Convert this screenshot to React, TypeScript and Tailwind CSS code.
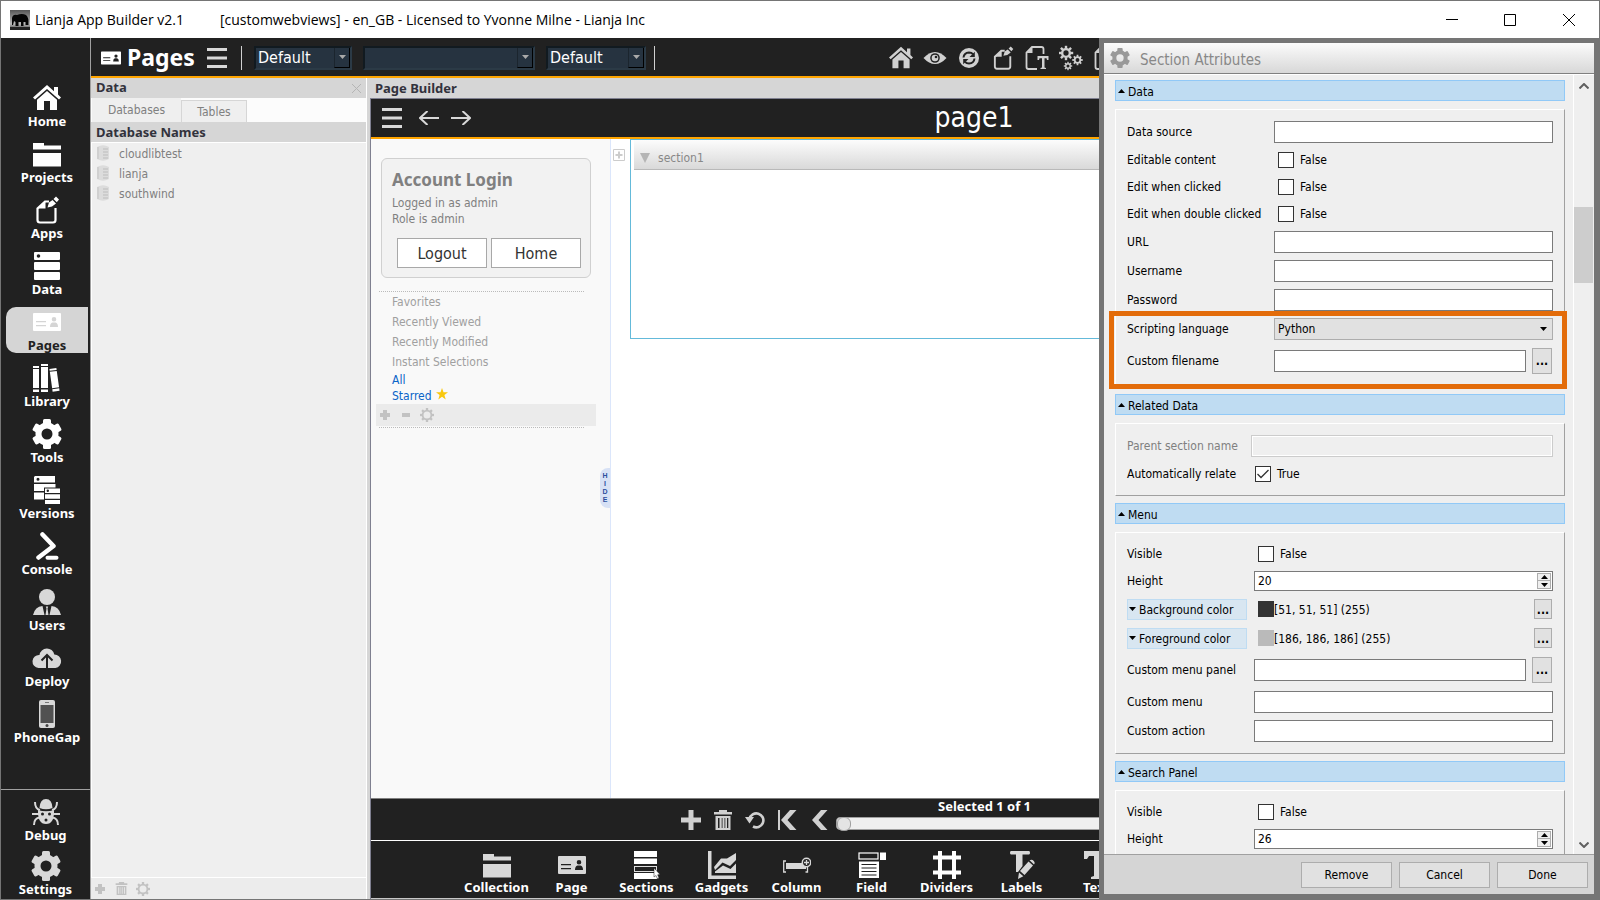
import { useState, type ReactNode } from 'react'

type IconProps = { className?: string }

/* ---------- icons ---------- */

function Gear({ className = '', teeth = 6, toothWidth = 8, hole = 6 }: IconProps & { teeth?: number; toothWidth?: number; hole?: number }) {
  const ring = 11 - hole
  return (
    <svg viewBox="-15 -15 30 30" className={className} aria-hidden="true">
      <circle r={hole + ring / 2} fill="none" stroke="currentColor" strokeWidth={ring + 1} />
      {Array.from({ length: teeth }, (_, i) => (
        <rect key={i} x={-toothWidth / 2} y={-15} width={toothWidth} height={6} rx={1.5} fill="currentColor" transform={`rotate(${(360 / teeth) * i})`} />
      ))}
    </svg>
  )
}

function ThinGear({ className = '' }: IconProps) {
  return (
    <svg viewBox="-15 -15 30 30" className={className} aria-hidden="true">
      <circle r="9.5" fill="none" stroke="currentColor" strokeWidth="4" />
      {Array.from({ length: 8 }, (_, i) => (
        <rect key={i} x="-2.5" y="-15" width="5" height="5" fill="currentColor" transform={`rotate(${45 * i})`} />
      ))}
    </svg>
  )
}

function HouseIcon({ className = '' }: IconProps) {
  return (
    <svg viewBox="0 0 28 28" className={className} fill="currentColor" aria-hidden="true">
      <path d="M14 1 L0 13.5 L2 15.6 L14 5 L26 15.6 L28 13.5 L25 10.6 V3 H21 V7.2 Z" />
      <path d="M14 7 L4 15.8 V26 H11 V17 H17 V26 H24 V15.8 Z" />
    </svg>
  )
}

function FolderIcon({ className = '' }: IconProps) {
  return (
    <svg viewBox="0 0 28 28" className={className} fill="currentColor" aria-hidden="true">
      <path d="M0 3 H11 V5.5 H28 V9.5 H0 Z" />
      <path d="M0 13 H28 V26.5 H0 Z" />
    </svg>
  )
}

function DocEditIcon({ className = '' }: IconProps) {
  return (
    <svg viewBox="0 0 28 28" className={className} aria-hidden="true">
      <path d="M16 5.5 H12 L4.5 12.5 V24 Q4.5 26.5 7 26.5 H20 Q22.5 26.5 22.5 24 V12" fill="none" stroke="currentColor" strokeWidth="2.2" />
      <path d="M12.5 5 V12.5 H4.5 Z" fill="currentColor" />
      <path d="M14.5 11.5 L16 6.5 L19.5 4 L23 7.5 L19 10.5 Z M20.5 3 L23 0.5 L26 3.5 L23.8 6.2 Z" fill="currentColor" />
    </svg>
  )
}

function DocTextIcon({ className = '' }: IconProps) {
  return (
    <svg viewBox="0 0 24 26" className={className} aria-hidden="true">
      <path d="M18.5 9 V4 Q18.5 2 16.5 2 H7 L1.5 7.5 V22 Q1.5 24 3.5 24 H12" fill="none" stroke="currentColor" strokeWidth="1.8" />
      <path d="M7.5 2 V8 H1.5 Z" fill="currentColor" />
      <path d="M12.5 11 H23.5 V15 H22 L21.5 13.2 H19.5 V22.5 L21 23 V24 H15.5 V23 L17 22.5 V13.2 H14.5 L14 15 H12.5 Z" fill="currentColor" />
    </svg>
  )
}

function ServerIcon({ className = '' }: IconProps) {
  return (
    <svg viewBox="0 0 28 28" className={className} aria-hidden="true">
      <path d="M2 0 H26 Q27 0 27 1 V7 Q27 8 26 8 H2 Q1 8 1 7 V1 Q1 0 2 0 Z M5.5 2.2 A1.8 1.8 0 1 0 5.5 5.8 A1.8 1.8 0 1 0 5.5 2.2 Z" fill="currentColor" fillRule="evenodd" />
      <rect x="1" y="10" width="26" height="8" rx="1" fill="currentColor" />
      <rect x="1" y="20" width="26" height="8" rx="1" fill="currentColor" />
    </svg>
  )
}

function CardIcon({ className = '' }: IconProps) {
  return (
    <svg viewBox="0 0 28 28" className={className} fill="currentColor" fillRule="evenodd" aria-hidden="true">
      <path d="M1 5 H27 Q28 5 28 6 V22 Q28 23 27 23 H1 Q0 23 0 22 V6 Q0 5 1 5 Z M3 13 V14.2 H13 V13 Z M3 17 V18.2 H13 V17 Z M21 9 A2.3 2.3 0 1 0 21 13.6 A2.3 2.3 0 1 0 21 9 Z M19.5 14.5 H22.5 Q25 15 25 19 H17 Q17 15 19.5 14.5 Z" />
    </svg>
  )
}

function BooksIcon({ className = '' }: IconProps) {
  return (
    <svg viewBox="0 0 28 28" className={className} fill="currentColor" aria-hidden="true">
      <path d="M0 2 H6 V4 H0 Z M0 5 H6 V24 H0 Z M0 25.5 H6 V28 H0 Z" />
      <path d="M8 0 H15 V2 H8 Z M8 3 H15 V24 H8 Z M8 25.5 H15 V28 H8 Z" />
      <g transform="rotate(-8 20 16)">
        <path d="M18 4.5 H25 V6.5 H18 Z M18 7.5 H25 V24 H18 Z M18 25 H25 V27.5 H18 Z" />
      </g>
    </svg>
  )
}

function VersionsIcon({ className = '' }: IconProps) {
  return (
    <svg viewBox="0 0 28 28" className={className} aria-hidden="true">
      <path d="M2 0 H22 V6.5 H1 V1 Z M5 1.8 A1.5 1.5 0 1 0 5 4.8 A1.5 1.5 0 1 0 5 1.8 Z" fill="currentColor" fillRule="evenodd" />
      <path d="M1 8 H22.5 V11.5 H11 V15 H1 Z M1 16.5 H11 V23.5 H1 Z" fill="currentColor" />
      <path d="M12 12.5 H27 V17 H12 Z M14.8 13.6 A1.2 1.2 0 1 0 14.8 16 A1.2 1.2 0 1 0 14.8 13.6 Z" fill="currentColor" fillRule="evenodd" />
      <path d="M12 18.3 H27 V22.7 H12 Z M12 24 H27 V28 H12 Z" fill="currentColor" />
    </svg>
  )
}

function ConsoleIcon({ className = '' }: IconProps) {
  return (
    <svg viewBox="0 0 28 28" className={className} fill="none" stroke="currentColor" strokeLinecap="round" strokeLinejoin="round" aria-hidden="true">
      <path d="M9.5 2.5 L20.5 14 L5.5 25.5" strokeWidth="4.5" />
      <path d="M14.5 25.7 H23.5" strokeWidth="4" />
    </svg>
  )
}

function UserIcon({ className = '' }: IconProps) {
  return (
    <svg viewBox="0 0 28 28" className={className} fill="currentColor" aria-hidden="true">
      <circle cx="14" cy="9" r="8" />
      <path d="M9.5 18 L11.5 27 H0 Q2 18.5 9.5 18 Z M18.500 18 Q26 18.500 28 27 H16.5 Z M12.800 18.5 H15.200 L14.500 20.500 L15.5 27 H12.5 L13.500 20.500 Z" />
    </svg>
  )
}

function CloudIcon({ className = '' }: IconProps) {
  return (
    <svg viewBox="0 0 30 22" className={className} aria-hidden="true">
      <path d="M6.5 21 A6.5 6.5 0 0 1 7.5 8 A7.5 7.5 0 0 1 22.3 7.5 A6.8 6.8 0 0 1 23.5 21 Z" fill="currentColor" />
      <path d="M15 21 V9 M9.5 13.5 L15 8 L20.5 13.5" fill="none" stroke="#212121" strokeWidth="2" />
    </svg>
  )
}

function PhoneIcon({ className = '' }: IconProps) {
  return (
    <svg viewBox="0 0 28 28" className={className} aria-hidden="true">
      <rect x="6" y="0" width="16" height="28" rx="2" fill="#d8d8d8" />
      <rect x="7.5" y="5" width="13" height="18" fill="#515151" />
      <path d="M12 2.5 H16" stroke="#777777" />
      <circle cx="14" cy="25.5" r="1.5" fill="#444444" />
    </svg>
  )
}

function BugIcon({ className = '' }: IconProps) {
  return (
    <svg viewBox="0 0 28 28" className={className} aria-hidden="true">
      <path d="M7.5 10 Q8 1 14 1 Q20 1 20.5 10 Q14 12.5 7.5 10 Z" fill="currentColor" />
      <path d="M6 12 Q14 14.5 22 12 Q22.500 26 14 26 Q5.500 26 6 12 Z" fill="currentColor" />
      <path d="M3 4 Q3 11 8 12 M25 4 Q25 11 20 12 M0 16 H7 M28 16 H21 M2 27 Q2 20 8 19.5 M26 27 Q26 20 20 19.5" fill="none" stroke="currentColor" strokeWidth="2" />
      <circle cx="10.5" cy="16" r="1.5" fill="#212121" />
      <circle cx="17.5" cy="16" r="1.5" fill="#212121" />
      <circle cx="14" cy="22" r="1.5" fill="#212121" />
    </svg>
  )
}

function EyeIcon({ className = '' }: IconProps) {
  return (
    <svg viewBox="0 0 24 14" className={className} aria-hidden="true">
      <path d="M0.5 7 Q6 1 12 1 Q18 1 23.5 7 Q18 13 12 13 Q6 13 0.5 7 Z" fill="currentColor" />
      <circle cx="12" cy="7" r="4.8" fill="#212121" />
      <circle cx="12" cy="7" r="3.3" fill="currentColor" />
      <circle cx="13" cy="6" r="1.3" fill="#212121" />
    </svg>
  )
}

function RefreshIcon({ className = '' }: IconProps) {
  return (
    <svg viewBox="0 0 20 20" className={className} aria-hidden="true">
      <circle cx="10" cy="10" r="10" fill="currentColor" />
      <path d="M4.5 9.5 Q5 4.8 10 4.5 Q12.5 4.5 14 6.2 M15.5 10.5 Q15 15.2 10 15.5 Q7.5 15.5 6 13.8" fill="none" stroke="#212121" strokeWidth="2" />
      <path d="M15.8 3.8 V9 H10.5 Z M4.2 16.2 V11 H9.5 Z" fill="#212121" />
    </svg>
  )
}

function GearsIcon({ className = '' }: IconProps) {
  const cog = (x: number, y: number, s: number) => (
    <g transform={`translate(${x} ${y}) scale(${s})`}>
      <circle r="8" fill="none" stroke="currentColor" strokeWidth="5" />
      {[0, 45, 90, 135, 180, 225, 270, 315].map(a => (
        <rect key={a} x="-2.5" y="-15" width="5" height="6" fill="currentColor" transform={`rotate(${a})`} />
      ))}
    </g>
  )
  return (
    <svg viewBox="0 0 24 26" className={className} aria-hidden="true">
      {cog(7, 8, 0.48)}
      {cog(18.5, 15, 0.35)}
      {cog(9, 21, 0.28)}
    </svg>
  )
}

function PlusIcon({ className = '' }: IconProps) {
  return (
    <svg viewBox="0 0 20 20" className={className} fill="currentColor" aria-hidden="true">
      <path d="M7.5 0 H12.5 V7.5 H20 V12.5 H12.5 V20 H7.5 V12.5 H0 V7.5 H7.5 Z" />
    </svg>
  )
}

function SmallPlusIcon({ className = '' }: IconProps) {
  return (
    <svg viewBox="0 0 10 10" className={className} fill="currentColor" aria-hidden="true">
      <path d="M3 0 H7 V3 H10 V7 H7 V10 H3 V7 H0 V3 H3 Z" />
    </svg>
  )
}

function TrashIcon({ className = '' }: IconProps) {
  return (
    <svg viewBox="0 0 18 20" className={className} fill="currentColor" fillRule="evenodd" aria-hidden="true">
      <path d="M5 0 H13 V2 H18 V4.5 H0 V2 H5 Z" />
      <path d="M1.5 6 H16.5 V20 H1.5 Z M4 8 V18 H5.5 V8 Z M7.7 8 V18 H8.5 V8 Z M10.5 8 V18 H11.3 V8 Z M13 8 V18 H14.3 V8 Z" />
    </svg>
  )
}

function UndoIcon({ className = '' }: IconProps) {
  return (
    <svg viewBox="0 0 20 20" className={className} aria-hidden="true">
      <path d="M4.5 9 A7 7 0 1 1 8 16.5" fill="none" stroke="currentColor" strokeWidth="2.6" />
      <path d="M0 7 H9 L4.5 13.5 Z" fill="currentColor" />
    </svg>
  )
}

function ChevronLeft({ className = '', bar = false }: IconProps & { bar?: boolean }) {
  return (
    <svg viewBox="0 0 20 20" className={className} fill="currentColor" aria-hidden="true">
      {bar && <path d="M0 0 H2 V20 H0 Z" />}
      <path d="M12 0 H18.5 L9.5 10 L18.5 20 H12 L3 10 Z" />
    </svg>
  )
}

function Hamburger({ className = '' }: IconProps) {
  return (
    <svg viewBox="0 0 20 20" className={className} fill="#d8d8d8" aria-hidden="true">
      <path d="M0 0 H20 V3 H0 Z M0 8.5 H20 V11.5 H0 Z M0 17 H20 V20 H0 Z" />
    </svg>
  )
}

function ArrowIcon({ className = '', flip = false }: IconProps & { flip?: boolean }) {
  return (
    <svg viewBox="0 0 20 14" className={className} fill="none" stroke="#d8d8d8" strokeWidth="2" aria-hidden="true">
      <path d={flip ? 'M0 7 H19 M11.5 0 L19 7 L11.5 14' : 'M20 7 H1 M8.5 0 L1 7 L8.5 14'} />
    </svg>
  )
}

function SectionsIcon({ className = '' }: IconProps) {
  return (
    <svg viewBox="0 0 28 28" className={className} aria-hidden="true">
      <path d="M1 0 H24 V6 H1 Z M1 7.5 H24 V13 H1 Z M1 22 H24 V28 H1 Z" fill="#ffffff" />
      <rect x="1.5" y="15.5" width="22" height="5" fill="#212121" stroke="#dddddd" />
      <path d="M21 17 V26 L23 24.5 L24.5 28 L26 27 L24.7 23.8 L27 23.5 Z" fill="#ffffff" stroke="#212121" strokeWidth="0.5" />
    </svg>
  )
}

function ChartIcon({ className = '' }: IconProps) {
  return (
    <svg viewBox="0 0 28 28" className={className} fill="#d8d8d8" aria-hidden="true">
      <path d="M0 0 H3.5 V24.5 H28 V28 H0 Z" />
      <path d="M6 16 L13 7.5 L19 7.500 L28 2 V9 L22 15 L14.5 11.5 L7 19 Z" />
      <path d="M7 22 V20.500 L15 14.5 L22.5 18 L28 12.5 V22 Z" />
    </svg>
  )
}

function ColumnIcon({ className = '' }: IconProps) {
  return (
    <svg viewBox="0 0 28 28" className={className} aria-hidden="true">
      <rect x="3" y="12" width="20" height="6" fill="#d8d8d8" />
      <path d="M3 10 H0.7 V21 H3 M22.5 21 H24.5 V16" fill="none" stroke="#d8d8d8" strokeWidth="1.3" />
      <circle cx="23.5" cy="11.5" r="4.2" fill="#212121" stroke="#d8d8d8" strokeWidth="1.5" />
      <path d="M21 11.5 H26 M23.5 9 V14" stroke="#d8d8d8" strokeWidth="1.3" />
    </svg>
  )
}

function FieldIcon({ className = '' }: IconProps) {
  return (
    <svg viewBox="0 0 28 28" className={className} aria-hidden="true">
      <rect x="1" y="2" width="19" height="6" fill="none" stroke="#ffffff" strokeWidth="1.2" />
      <rect x="22" y="1.5" width="6" height="7.5" fill="#ffffff" />
      <rect x="1" y="10.5" width="20" height="16.5" fill="#ffffff" />
      <path d="M3.5 13.5 H18.5 M3.5 17 H18.5 M3.5 20.5 H18.5 M3.5 24 H18.5" stroke="#212121" strokeWidth="1.2" />
    </svg>
  )
}

function GridIcon({ className = '' }: IconProps) {
  return (
    <svg viewBox="0 0 28 28" className={className} stroke="#ffffff" strokeWidth="4" aria-hidden="true">
      <path d="M7 0 V28 M21 0 V28 M0 6.5 H28 M0 21.5 H28" />
    </svg>
  )
}

function LabelIcon({ className = '' }: IconProps) {
  return (
    <svg viewBox="0 0 28 28" className={className} fill="#d8d8d8" aria-hidden="true">
      <path d="M3 0 H21 Q22 0 22 1.800 Q22 3.500 21 3.500 H14.5 V15 L10 21 H8 V3.5 H3 Q2 3.500 2 1.800 Q2 0 3 0 Z" />
      <path d="M12 20 L20.5 10.5 L25 14.5 L16.5 24 Z M21.5 9.3 Q24 8 26 10.2 Q27.5 12 26 13.5 Z M11 21.5 L15.3 25.2 L10 28 Z" />
    </svg>
  )
}

function BigTIcon({ className = '' }: IconProps) {
  return (
    <svg viewBox="0 0 28 28" className={className} fill="#d8d8d8" aria-hidden="true">
      <path d="M1 0 H27 V8 H24 L22 5 H17 V25 L20 26 V28 H8 V26 L11 25 V5 H6 L4 8 H1 Z" />
    </svg>
  )
}

function DatabaseIcon({ className = '' }: IconProps) {
  return (
    <svg viewBox="0 0 12 16" className={className} aria-hidden="true">
      <path d="M0 2 Q6 -1.5 12 2 V14 Q6 17.5 0 14 Z" fill="#dcdcdc" />
      <path d="M6 4 H11 M6 7 H11 M6 10 H11 M6 13 H11" stroke="#c6c6c6" strokeWidth="1.5" />
      <path d="M1 2 V14" stroke="#d0d0d0" strokeWidth="2" />
    </svg>
  )
}

function Triangle({ up = false, className = '' }: IconProps & { up?: boolean }) {
  return (
    <svg viewBox="0 0 7 4" className={`h-1 w-[7px] shrink-0 ${className}`} fill="currentColor" aria-hidden="true">
      <path d={up ? 'M0 4 L3.5 0 L7 4 Z' : 'M0 0 L3.5 4 L7 0 Z'} />
    </svg>
  )
}

/* ---------- window ---------- */

function TitleBar() {
  return (
    <header className="flex h-[37px] shrink-0 items-center bg-white pl-[9px] font-['Open_Sans',sans-serif] text-sm text-black">
      <svg viewBox="0 0 20 20" className="size-5" aria-hidden="true">
        <defs>
          <linearGradient id="logo" x1="0" y1="0" x2="0" y2="1">
            <stop offset="0" stopColor="#555555" />
            <stop offset="0.7" stopColor="#bbbbbb" />
            <stop offset="1" stopColor="#333333" />
          </linearGradient>
        </defs>
        <rect width="20" height="20" fill="url(#logo)" />
        <path d="M2 15 V8 Q3 4 7 5 Q12 3 16 5 Q19 7 18.5 15 H15.5 V12 H13.5 V16 H11 V12 H8.5 V16 H5.5 V12 L4 11 L3 15 Z" fill="#050505" />
        <rect y="17" width="20" height="3" fill="#222222" />
      </svg>
      <span className="ml-[5px] whitespace-pre">Lianja App Builder v2.1</span>
      <span className="ml-9 whitespace-pre">[customwebviews] - en_GB - Licensed to Yvonne Milne - Lianja Inc</span>
      <div className="ml-auto flex">
        <button aria-label="Minimize" className="flex h-9 w-[58px] items-center justify-center">
          <svg viewBox="0 0 12 12" className="size-3" stroke="#000000" fill="none"><path d="M0 5.5 H12" /></svg>
        </button>
        <button aria-label="Maximize" className="flex h-9 w-[58px] items-center justify-center">
          <svg viewBox="0 0 12 12" className="size-3" stroke="#000000" fill="none"><path d="M0.5 0.5 H11.5 V11.5 H0.5 Z" /></svg>
        </button>
        <button aria-label="Close" className="flex h-9 w-[60px] items-center justify-center">
          <svg viewBox="0 0 12 12" className="size-3" stroke="#000000" fill="none"><path d="M0 0 L12 12 M12 0 L0 12" /></svg>
        </button>
      </div>
    </header>
  )
}

const navItems: { label: string; icon: ReactNode; active?: boolean }[] = [
  { label: 'Home', icon: <HouseIcon className="size-7" /> },
  { label: 'Projects', icon: <FolderIcon className="size-7" /> },
  { label: 'Apps', icon: <DocEditIcon className="size-7" /> },
  { label: 'Data', icon: <ServerIcon className="size-7" /> },
  { label: 'Pages', icon: <CardIcon className="size-7" />, active: true },
  { label: 'Library', icon: <BooksIcon className="size-7" /> },
  { label: 'Tools', icon: <Gear className="size-[30px]" /> },
  { label: 'Versions', icon: <VersionsIcon className="size-7" /> },
  { label: 'Console', icon: <ConsoleIcon className="size-7" /> },
  { label: 'Users', icon: <UserIcon className="size-7 text-[#d8d8d8]" /> },
  { label: 'Deploy', icon: <CloudIcon className="h-[22px] w-[30px] text-[#d8d8d8]" /> },
  { label: 'PhoneGap', icon: <PhoneIcon className="size-7" /> },
]

function Sidebar() {
  return (
    <nav className="flex w-[90px] shrink-0 flex-col border-r border-[#a0a0a0] bg-[#212121] font-['Noto_Sans',sans-serif] text-[13px] font-bold text-white">
      <div className="flex flex-col gap-[10px] pt-[45px] pl-[5px]">
        {navItems.map(item => (
          <button
            key={item.label}
            className={`flex h-[46px] w-[82px] flex-col items-center justify-end rounded-l-[10px] ${item.active ? 'bg-[#d5d5d5]' : ''}`}
          >
            <span className="flex h-[30px] items-center justify-center">{item.icon}</span>
            <span className={`h-4 leading-4 ${item.active ? 'text-[#212121]' : ''}`}>{item.label}</span>
          </button>
        ))}
      </div>
      <div className="mt-auto flex flex-col gap-2 border-t border-[#a0a0a0] pt-[7px] pb-[2px]">
        <button className="flex h-[46px] flex-col items-center justify-end">
          <span className="flex h-[30px] items-center"><BugIcon className="size-7 text-[#d8d8d8]" /></span>
          <span className="h-4 leading-4">Debug</span>
        </button>
        <button className="flex h-[46px] flex-col items-center justify-end">
          <span className="flex h-[30px] items-center"><Gear className="size-[30px] text-[#d8d8d8]" /></span>
          <span className="h-4 leading-4">Settings</span>
        </button>
      </div>
    </nav>
  )
}

function ToolbarSelect({ label, value, className }: { label: string; value: string; className: string }) {
  return (
    <div className={`relative h-6 ${className}`}>
      <select
        aria-label={label}
        defaultValue={value}
        className="size-full appearance-none border-2 border-t-[#111a20] border-r-[#2b3a46] border-b-[#2b3a46] border-l-[#111a20] bg-[#263340] pl-[2px] text-base leading-5 text-white"
      >
        <option>{value}</option>
      </select>
      <span className="pointer-events-none absolute top-[2px] right-[2px] flex h-5 w-4 items-center justify-center border-r border-b border-l border-r-black border-b-black border-l-[#1b252e]">
        <Triangle className="text-[#aaaaaa]" />
      </span>
    </div>
  )
}

function Toolbar() {
  return (
    <div className="flex h-10 shrink-0 items-center border-b-2 border-[#ffa500] bg-[#212121] pt-px pl-[10px] text-[#d0d0d0]">
      <CardIcon className="size-5 text-white" />
      <h1 className="ml-[6px] w-[73px] font-['Noto_Sans',sans-serif] text-[23px] leading-none font-bold text-white">Pages</h1>
      <button aria-label="Pages menu" className="ml-[7px]"><Hamburger className="size-5" /></button>
      <div className="ml-[14px] h-6 w-px bg-[#d0d0d0]" />
      <ToolbarSelect label="Theme" value="Default" className="ml-3 w-[98px]" />
      <ToolbarSelect label="Filter" value="" className="ml-[11px] w-[172px]" />
      <ToolbarSelect label="Layout" value="Default" className="ml-[11px] w-[100px]" />
      <div className="ml-2 h-6 w-px bg-[#d0d0d0]" />
      <div className="ml-auto flex items-center gap-[10px] pr-[481px]">
        <button aria-label="Home page"><HouseIcon className="size-6" /></button>
        <button aria-label="Preview"><EyeIcon className="h-[14px] w-6" /></button>
        <button aria-label="Refresh" className="px-[2px]"><RefreshIcon className="size-5" /></button>
        <button aria-label="Edit document"><DocEditIcon className="size-6" /></button>
        <button aria-label="Edit text"><DocTextIcon className="h-[26px] w-6" /></button>
        <button aria-label="Options"><GearsIcon className="h-[26px] w-6" /></button>
        <button aria-label="New document" className="pl-px"><DocTextIcon className="h-[26px] w-6" /></button>
      </div>
    </div>
  )
}

function DataPanel() {
  return (
    <aside className="flex w-[276px] shrink-0 flex-col border-r border-white bg-[#efefef] text-xs text-[#808080]">
      <div className="flex h-5 items-center justify-between bg-[#d6d6d6] pr-[5px] pl-[5px] font-['Noto_Sans',sans-serif] text-[13px] font-bold text-[#32323c]">
        <span>Data</span>
        <button aria-label="Close panel">
          <svg viewBox="0 0 9 9" className="size-[9px]" stroke="#b5b5b5" fill="none"><path d="M0 0 L9 9 M9 0 L0 9" /></svg>
        </button>
      </div>
      <div role="tablist" className="flex h-6 items-end bg-[#fcfcfc] pl-px">
        <button role="tab" aria-selected="true" className="h-6 w-[89px] bg-[#efefef]">Databases</button>
        <button role="tab" aria-selected="false" className="h-[22px] w-[66px] border-t border-r border-l border-[#d6d6d6] bg-[#efefef]">Tables</button>
      </div>
      <div className="h-5 bg-[#d6d6d6] pl-[5px] font-['Noto_Sans',sans-serif] text-[13px] leading-5 font-bold text-[#32323c]">Database Names</div>
      <ul className="flex-1 border-t border-l border-white">
        {['cloudlibtest', 'lianja', 'southwind'].map(name => (
          <li key={name} className="flex h-5 items-center pl-[5px]">
            <DatabaseIcon className="h-4 w-3" />
            <span className="ml-[10px] pt-[2px]">{name}</span>
          </li>
        ))}
      </ul>
      <div className="flex h-[22px] shrink-0 items-center border-t border-white bg-[#ececec] pl-1 text-[#c2c2c2]">
        <button aria-label="Add database"><SmallPlusIcon className="size-[10px]" /></button>
        <button aria-label="Delete database" className="ml-[10px]"><TrashIcon className="size-[13px]" /></button>
        <button aria-label="Database settings" className="ml-2"><ThinGear className="size-[14px]" /></button>
      </div>
    </aside>
  )
}

function PageNavigator() {
  return (
    <div className="flex w-60 shrink-0 flex-col border-r border-[#dbe6fb] bg-[#f9f9f9] text-xs">
      <section className="mt-[19px] ml-[10px] flex h-[120px] w-[210px] flex-col rounded-md border border-[#d0d0d0] bg-[#f2f2f2] pl-[10px] text-[#808080]">
        <h2 className="mt-[9px] font-['Noto_Sans',sans-serif] text-[17px] leading-6 font-bold">Account Login</h2>
        <p className="mt-[3px] leading-4">Logged in as admin</p>
        <p className="leading-4">Role is admin</p>
        <div className="mt-[11px] flex gap-1 pl-[5px] text-base text-[#333333]">
          <button className="h-[30px] w-[90px] border border-[#a8a8a8] bg-white pt-[2px]">Logout</button>
          <button className="h-[30px] w-[90px] border border-[#a8a8a8] bg-white pt-[2px]">Home</button>
        </div>
      </section>
      <div className="mt-[13px] mr-[26px] ml-2 border-t border-dotted border-[#bbbbbb]" />
      <ul className="pl-[21px] leading-5 text-[#a0a0a0]">
        <li>Favorites</li>
        <li>Recently Viewed</li>
        <li>Recently Modified</li>
        <li>Instant Selections</li>
      </ul>
      <div className="flex flex-col items-start pl-[21px] leading-4 text-[#0a64c8]">
        <a href="#all">All</a>
        <a href="#starred" className="flex">
          Starred
          <svg viewBox="0 0 12 12" className="ml-1 size-3" fill="#f9c80e" aria-hidden="true">
            <path d="M6 0 L7.5 4.3 H12 L8.4 7 L9.7 11.5 L6 8.8 L2.3 11.5 L3.6 7 L0 4.3 H4.5 Z" />
          </svg>
        </a>
      </div>
      <div className="ml-[5px] flex h-[22px] w-[220px] items-center bg-[#ebebeb] pl-1 text-[#c2c2c2]">
        <button aria-label="Add selection"><SmallPlusIcon className="size-[10px]" /></button>
        <button aria-label="Remove selection" className="ml-3 h-1 w-2 bg-[#c2c2c2]" />
        <button aria-label="Selection settings" className="ml-[10px]"><ThinGear className="size-[14px]" /></button>
      </div>
      <div className="mt-px mr-[26px] ml-2 border-t border-dotted border-[#bbbbbb]" />
      <button
        aria-label="Hide navigator"
        className="mt-10 flex h-10 w-[10px] flex-col items-center justify-center self-end rounded-l-lg bg-[#d7e1f5] font-['Liberation_Sans',sans-serif] text-[7px] leading-[8px] font-bold text-[#2c4f9e]"
      >
        <span>H</span>
        <span>I</span>
        <span>D</span>
        <span>E</span>
      </button>
    </div>
  )
}

const paletteItems: { label: string; icon: ReactNode }[] = [
  { label: 'Collection', icon: <FolderIcon className="size-7 text-[#d8d8d8]" /> },
  { label: 'Page', icon: <CardIcon className="size-7 text-[#d8d8d8]" /> },
  { label: 'Sections', icon: <SectionsIcon className="size-7" /> },
  { label: 'Gadgets', icon: <ChartIcon className="size-7" /> },
  { label: 'Column', icon: <ColumnIcon className="size-7" /> },
  { label: 'Field', icon: <FieldIcon className="size-7" /> },
  { label: 'Dividers', icon: <GridIcon className="size-7" /> },
  { label: 'Labels', icon: <LabelIcon className="size-7" /> },
  { label: 'Text', icon: <BigTIcon className="size-7" /> },
]

function PageBuilder() {
  return (
    <main className="flex min-w-0 flex-1 flex-col bg-[#d6d6d6] pl-[3px]">
      <h2 className="h-5 shrink-0 pl-[5px] font-['Noto_Sans',sans-serif] text-[13px] leading-5 font-bold text-[#32323c]">Page Builder</h2>
      <div className="flex min-h-0 flex-1 flex-col border-t border-l border-[#7f8090] bg-white">
        <div className="flex h-10 shrink-0 items-center border-b-2 border-[#ffa500] bg-[#212121] pl-[11px]">
          <button aria-label="Page menu"><Hamburger className="size-5" /></button>
          <button aria-label="Back" className="ml-[17px]"><ArrowIcon className="h-[14px] w-5" /></button>
          <button aria-label="Forward" className="ml-3"><ArrowIcon flip className="h-[14px] w-5" /></button>
          <div className="flex-1 pr-[122px] text-center text-[28px] leading-8 text-white">page1</div>
        </div>
        <div className="flex min-h-0 flex-1">
          <PageNavigator />
          <div className="flex min-w-0 flex-1">
            <button aria-label="Expand sections" className="mt-[10px] ml-[2px] size-3 shrink-0">
              <svg viewBox="0 0 12 12" className="size-3" fill="none" stroke="#cccccc">
                <path d="M0.5 0.5 H11.5 V11.5 H0.5 Z" />
                <path d="M2.5 6 H9.5 M6 2.5 V9.5" strokeWidth="2" />
              </svg>
            </button>
            <section className="ml-[5px] h-[200px] flex-1 border border-[#64bada] bg-white pl-[3px]">
              <div className="flex h-[30px] items-center border-b border-[#b9b9b9] bg-linear-to-b from-[#fcfcfc] to-[#d9d9d9] pt-[6px] pl-[6px] text-xs text-[#888888]">
                <svg viewBox="0 0 10 10" className="size-[10px]" fill="#b5b5b5" aria-hidden="true"><path d="M0 0 H10 L5 10 Z" /></svg>
                <span className="ml-2">section1</span>
              </div>
            </section>
          </div>
        </div>
        <div className="flex h-[42px] shrink-0 items-center border-t border-[#808080] bg-[#212121] pl-[310px] text-[#d0d0d0]">
          <button aria-label="Add record"><PlusIcon className="size-5" /></button>
          <button aria-label="Delete record" className="ml-[13px]"><TrashIcon className="h-5 w-[18px]" /></button>
          <button aria-label="Undo" className="ml-[13px]"><UndoIcon className="size-5" /></button>
          <button aria-label="First record" className="ml-[13px]"><ChevronLeft bar className="size-5" /></button>
          <button aria-label="Previous record" className="ml-[11px]"><ChevronLeft className="size-5" /></button>
          <div className="ml-[7px] flex h-full flex-1 flex-col">
            <label htmlFor="record-slider" className="pr-[466px] text-center font-['Noto_Sans',sans-serif] text-[13px] leading-[14px] font-bold text-white">Selected 1 of 1</label>
            <input
              id="record-slider"
              type="range"
              min="1"
              max="1"
              defaultValue="1"
              className="mt-1 h-[13px] w-full appearance-none rounded border border-[#a0a0a0] bg-[#efefef] [&::-webkit-slider-thumb]:size-[14px] [&::-webkit-slider-thumb]:appearance-none [&::-webkit-slider-thumb]:rounded-md [&::-webkit-slider-thumb]:border [&::-webkit-slider-thumb]:border-[#a0a0a0] [&::-webkit-slider-thumb]:bg-[#e4e4e4]"
            />
          </div>
        </div>
        <div className="flex h-[59px] shrink-0 overflow-hidden border-t border-b border-t-white border-b-[#c8c8c8] bg-[#212121] pl-[88px] font-['Noto_Sans',sans-serif] text-[13px] font-bold text-white">
          {paletteItems.map(item => (
            <button key={item.label} className="flex w-[75px] shrink-0 flex-col items-center justify-start pt-[10px]">
              {item.icon}
              <span className="h-4 leading-4">{item.label}</span>
            </button>
          ))}
        </div>
      </div>
    </main>
  )
}

/* ---------- section attributes ---------- */

const textBox = 'h-[22px] w-full border border-[#7a7a7a] bg-white px-[3px]'
const ellipsisButton = 'shrink-0 border border-[#adadad] bg-[#e1e1e1] text-center font-bold'

function Group({ title, columns, children }: { title: string; columns: string; children: ReactNode }) {
  return (
    <>
      <button className="flex h-[21px] w-full shrink-0 items-center border border-[#91c9f7] bg-[#bfdcf2] pl-[2px]">
        <Triangle up />
        <span className="ml-[3px] pt-[3px]">{title}</span>
      </button>
      <div className={`mt-2 mb-[7px] grid shrink-0 items-center gap-y-[7px] border border-t-white border-r-[#a0a0a0] border-b-[#a0a0a0] border-l-white p-[11px] whitespace-nowrap ${columns}`}>
        {children}
      </div>
    </>
  )
}

function TextRow({ id, label, disabled = false }: { id: string; label: string; disabled?: boolean }) {
  return (
    <>
      <label htmlFor={id} className={disabled ? 'text-[#808080]' : ''}>{label}</label>
      <input
        id={id}
        type={id === 'password' ? 'password' : 'text'}
        disabled={disabled}
        className={disabled ? 'h-[22px] w-full border border-[#cccccc] bg-[#efefef] outline-1 -outline-offset-2 outline-white' : textBox}
      />
    </>
  )
}

function BrowseRow({ id, label }: { id: string; label: string }) {
  return (
    <>
      <label htmlFor={id}>{label}</label>
      <div className="flex h-7 items-center pr-px">
        <input id={id} type="text" className={textBox} />
        <button aria-label={`Browse ${label}`} className={`ml-[6px] h-[26px] w-5 ${ellipsisButton}`}>...</button>
      </div>
    </>
  )
}

function CheckRow({ id, label, initial = false }: { id: string; label: string; initial?: boolean }) {
  const [checked, setChecked] = useState(initial)
  return (
    <>
      <label htmlFor={id}>{label}</label>
      <div className="flex h-5 items-center pl-1">
        <span className="relative size-4">
          <input
            id={id}
            type="checkbox"
            checked={checked}
            onChange={e => setChecked(e.target.checked)}
            className="block size-4 appearance-none border border-[#333333] bg-white"
          />
          {checked && (
            <svg viewBox="0 0 16 16" className="pointer-events-none absolute inset-0 size-4" fill="none" stroke="#333333" strokeWidth="1.3">
              <path d="M2.5 8 L6 11.5 L13.5 4" />
            </svg>
          )}
        </span>
        <span className="ml-[6px]">{checked ? 'True' : 'False'}</span>
      </div>
    </>
  )
}

function SpinRow({ id, label, initial }: { id: string; label: string; initial: number }) {
  const [value, setValue] = useState(initial)
  return (
    <>
      <label htmlFor={id}>{label}</label>
      <div className="flex h-5 items-center border border-[#7a7a7a] bg-white pr-px pl-[3px]">
        <input
          id={id}
          type="text"
          inputMode="numeric"
          value={value}
          onChange={e => setValue(Number(e.target.value) || 0)}
          className="h-4 min-w-0 flex-1 bg-white outline-none"
        />
        <div className="flex flex-col">
          <button aria-label={`Increase ${label}`} onClick={() => setValue(value + 1)} className="flex h-2 w-[14px] items-center justify-center border border-[#adadad] bg-[#efefef]">
            <Triangle up />
          </button>
          <button aria-label={`Decrease ${label}`} onClick={() => setValue(value - 1)} className="flex h-2 w-[14px] items-center justify-center border border-t-0 border-[#adadad] bg-[#efefef]">
            <Triangle />
          </button>
        </div>
      </div>
    </>
  )
}

function ColorRow({ label, swatch, text }: { label: string; swatch: string; text: string }) {
  return (
    <>
      <button className="flex h-[21px] w-[120px] items-center border border-[#bfdcf2] bg-[#d8e6f1] pl-px">
        <Triangle />
        <span className="ml-[3px] pt-[2px]">{label}</span>
      </button>
      <div className="flex h-[22px] items-center pr-px pl-1">
        <span className={`size-4 ${swatch}`} />
        <span className="pt-px">{text}</span>
        <button aria-label={`Choose ${label}`} className={`ml-auto h-5 w-[18px] leading-5 ${ellipsisButton}`}>...</button>
      </div>
    </>
  )
}

function SectionAttributes() {
  return (
    <aside className="absolute top-0 right-0 bottom-0 flex w-[500px] flex-col border-[5px] border-[#757575] bg-[#efefef] text-xs leading-4 text-black">
      <header className="flex h-[31px] shrink-0 items-center border-b border-[#808080] bg-linear-to-b from-[#fbfbfb] to-[#d8d8d8] pl-[6px]">
        <Gear className="size-5 text-[#999999]" />
        <h2 className="ml-[10px] pt-1 text-[15px] leading-5 text-[#888888]">Section Attributes</h2>
      </header>
      <div className="flex min-h-0 flex-1 border-t border-white">
        <div className="flex min-w-0 flex-1 flex-col overflow-hidden pt-[5px] pr-2 pl-[11px]">
          <Group title="Data" columns="grid-cols-[147px_1fr]">
            <TextRow id="data-source" label="Data source" />
            <CheckRow id="editable-content" label="Editable content" />
            <CheckRow id="edit-clicked" label="Edit when clicked" />
            <CheckRow id="edit-double-clicked" label="Edit when double clicked" />
            <TextRow id="url" label="URL" />
            <TextRow id="username" label="Username" />
            <TextRow id="password" label="Password" />
            {/* highlighted rows */}
            <div className="relative col-span-2 grid grid-cols-[147px_1fr] items-center gap-y-[7px]">
              <div className="pointer-events-none absolute -top-[7px] -right-[14px] -bottom-[14px] -left-[18px] border-[5px] border-[#e36c0a]" />
              <label htmlFor="scripting-language">Scripting language</label>
              <div className="relative">
                <select id="scripting-language" className="block h-[22px] w-full appearance-none border border-[#adadad] bg-[#e1e1e1] pl-[3px]">
                  <option>Python</option>
                  <option>JavaScript</option>
                  <option>VFP</option>
                </select>
                <Triangle className="pointer-events-none absolute top-[9px] right-[6px]" />
              </div>
              <BrowseRow id="custom-filename" label="Custom filename" />
            </div>
          </Group>
          <Group title="Related Data" columns="grid-cols-[124px_1fr]">
            <TextRow id="parent-section" label="Parent section name" disabled />
            <CheckRow id="auto-relate" label="Automatically relate" initial />
          </Group>
          <Group title="Menu" columns="grid-cols-[127px_1fr]">
            <CheckRow id="menu-visible" label="Visible" />
            <SpinRow id="menu-height" label="Height" initial={20} />
            <ColorRow label="Background color" swatch="bg-[#333333]" text="[51, 51, 51] (255)" />
            <ColorRow label="Foreground color" swatch="bg-[#bababa]" text="[186, 186, 186] (255)" />
            <BrowseRow id="custom-menu-panel" label="Custom menu panel" />
            <TextRow id="custom-menu" label="Custom menu" />
            <TextRow id="custom-action" label="Custom action" />
          </Group>
          <Group title="Search Panel" columns="grid-cols-[127px_1fr]">
            <CheckRow id="search-visible" label="Visible" />
            <SpinRow id="search-height" label="Height" initial={26} />
          </Group>
        </div>
        <div className="flex w-[21px] shrink-0 flex-col items-center border-l border-white pt-2 pr-px pb-[6px]">
          <svg viewBox="0 0 10 6" className="h-[6px] w-[10px]" fill="none" stroke="#606060" strokeWidth="2"><path d="M0.5 5.5 L5 1 L9.5 5.5" /></svg>
          <div className="mt-[118px] h-[76px] w-[19px] bg-[#cdcdcd]" />
          <svg viewBox="0 0 10 6" className="mt-auto h-[6px] w-[10px]" fill="none" stroke="#606060" strokeWidth="2"><path d="M0.5 0.5 L5 5 L9.5 0.5" /></svg>
        </div>
      </div>
      <footer className="flex h-10 shrink-0 justify-end gap-[7px] border-t border-[#a0a0a0] bg-[#d5d5d5] pt-[7px] pr-[6px]">
        <button className="h-[26px] w-[91px] border border-[#adadad] bg-[#e1e1e1]">Remove</button>
        <button className="h-[26px] w-[91px] border border-[#adadad] bg-[#e1e1e1]">Cancel</button>
        <button className="h-[26px] w-[91px] border border-[#adadad] bg-[#e1e1e1]">Done</button>
      </footer>
    </aside>
  )
}

export default function App() {
  return (
    <div className="flex h-screen flex-col overflow-hidden border border-[#757575] bg-white font-['DejaVu_Sans_Condensed','Noto_Sans',sans-serif]">
      <TitleBar />
      <div className="relative flex min-h-0 flex-1">
        <Sidebar />
        <div className="flex min-w-0 flex-1 flex-col">
          <Toolbar />
          <div className="flex min-h-0 flex-1">
            <DataPanel />
            <PageBuilder />
          </div>
        </div>
        <SectionAttributes />
      </div>
    </div>
  )
}
